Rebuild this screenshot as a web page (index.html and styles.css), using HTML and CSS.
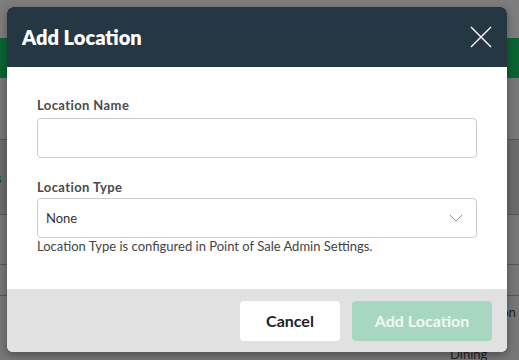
FILE: index.html
```html
<!DOCTYPE html>
<html>
<head>
<meta charset="utf-8">
<link rel="stylesheet" href="styles.css">
</head>
<body>
<div class="page">
  <div class="topbar"></div>
  <div class="greenbar"></div>
  <div class="row r1"><span class="bgtext">Locations</span></div>
  <div class="row r2"><span class="bgtext green">s</span></div>
  <div class="row r3"></div>
  <div class="row r4"></div>
  <div class="row r5"><span class="bgtext right">Location</span></div>
  <div class="row r6"><span class="bgtext dining">Dining</span></div>
</div>
<div class="modal">
  <div class="modal-header">
    <h2 class="modal-title">Add Location</h2>
    <svg class="close" width="22" height="22" viewBox="0 0 22 22"><path d="M1 1L21 21M21 1L1 21" stroke="#ffffff" stroke-width="1.4" fill="none"/></svg>
  </div>
  <div class="modal-body">
    <label class="label">Location Name</label>
    <div class="input"></div>
    <label class="label second">Location Type</label>
    <div class="input select">
      <span>None</span>
      <svg width="14" height="8" viewBox="0 0 14 8"><path d="M1 1L7 7L13 1" stroke="#8a8a8a" stroke-width="1" fill="none"/></svg>
    </div>
    <div class="help">Location Type is configured in Point of Sale Admin Settings.</div>
  </div>
  <div class="modal-footer">
    <button class="btn cancel">Cancel</button>
    <button class="btn primary">Add Location</button>
  </div>
</div>
</body>
</html>
```
FILE: styles.css
```css
html, body {
  margin: 0;
  padding: 0;
}
body {
  width: 519px;
  height: 360px;
  overflow: hidden;
  position: relative;
  background: #767676;
  font-family: Lato, "Liberation Sans", sans-serif;
}
.page {
  display: flex;
  flex-direction: column;
  height: 360px;
  overflow: hidden;
}
.topbar {
  height: 38px;
  flex-shrink: 0;
  background: #7d7d7d;
}
.greenbar {
  height: 40px;
  flex-shrink: 0;
  background: #0b6333;
}
.row {
  flex-shrink: 0;
  border-bottom: 1px solid #575757;
  background: #777777;
  position: relative;
  font-size: 13px;
  color: #222;
}
.r1 { height: 61px; }
.r2 { height: 74px; background: #6b6b6b; }
.r3 { height: 49px; }
.r4 { height: 30px; }
.r5 { height: 30px; border-bottom: none; }
.r6 { height: 34px; border-bottom: none; }
.bgtext {
  position: absolute;
}
.r1 .bgtext { left: -58px; top: 26px; }
.r2 .bgtext.green { left: -4px; top: 30px; color: #0b5a2e; font-weight: bold; }
.r5 .bgtext.right { left: 467px; top: 8px; }
.r6 .bgtext.dining { left: 450px; top: 20px; }

.modal {
  position: absolute;
  left: 7px;
  top: 7px;
  width: 500px;
  height: 345px;
  border-radius: 6px;
  overflow: hidden;
  background: #ffffff;
  box-shadow: 0 3px 8px rgba(0,0,0,0.35);
  display: flex;
  flex-direction: column;
}
.modal-header {
  height: 60px;
  background: #243743;
  display: flex;
  align-items: center;
  justify-content: space-between;
  padding: 0 15px 0 15px;
  flex-shrink: 0;
}
.modal-title {
  margin: 0;
  color: #ffffff;
  font-size: 20px;
  font-weight: 800;
}
.close {
  display: block;
}
.modal-body {
  flex: 1;
  padding: 30px 30px 0 30px;
  display: flex;
  flex-direction: column;
}
.label {
  font-size: 13px;
  font-weight: 700;
  letter-spacing: 0.4px;
  color: #4a4a4a;
  line-height: 16px;
  margin-bottom: 5px;
}
.label.second {
  margin-top: 21px;
  margin-bottom: 3px;
}
.input {
  height: 38px;
  border: 1px solid #cccccc;
  border-radius: 4px;
  background: #fff;
}
.select {
  display: flex;
  align-items: center;
  justify-content: space-between;
  padding: 0 13px 0 8px;
  font-size: 13px;
  color: #333;
}
.help {
  font-size: 13px;
  color: #444;
  margin-top: 1px;
  line-height: 15px;
}
.modal-footer {
  height: 63px;
  flex-shrink: 0;
  background: #e1e1e1;
  display: flex;
  justify-content: flex-end;
  align-items: center;
  gap: 12px;
  padding: 0 15px;
  box-sizing: border-box;
}
.btn {
  height: 40px;
  border: none;
  border-radius: 4px;
  font-family: Lato, "Liberation Sans", sans-serif;
  font-size: 16px;
  font-weight: 700;
  padding: 0;
}
.cancel {
  width: 100px;
  background: #ffffff;
  color: #222;
}
.primary {
  width: 140px;
  background: #a8d7c1;
  color: #f2f8f5;
}
```
